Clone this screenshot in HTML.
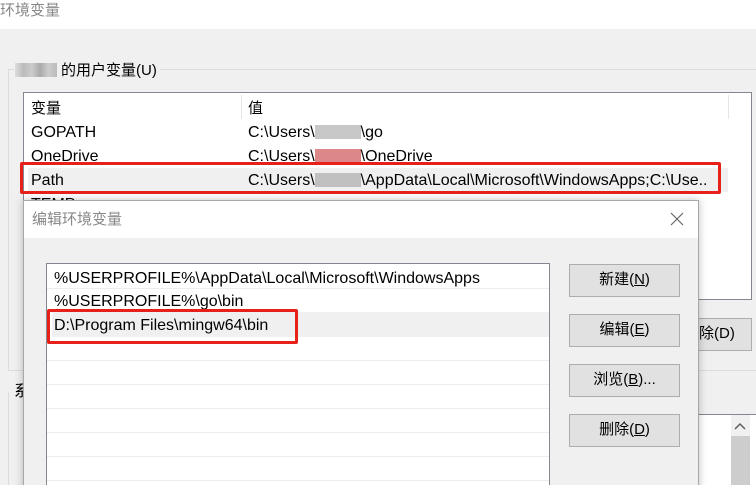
<!DOCTYPE html><html><head><meta charset="utf-8"><style>
*{margin:0;padding:0;box-sizing:border-box}
html{overflow:hidden;height:485px}
body{width:756px;height:485px;overflow:hidden;background:#f0f0f0;position:relative;font-family:"Liberation Sans","Noto Sans CJK SC",sans-serif;font-size:16px;color:#000}
.a{position:absolute}
.t{position:absolute;white-space:nowrap;line-height:18px}
.btn{position:absolute;background:#e1e1e1;border:1px solid #adadad;text-align:center;line-height:30px;font-size:15px;white-space:nowrap}
.hl{position:absolute;height:1px;background:#ececec}
</style></head><body>
<div class="a" style="left:0;top:0;width:756px;height:29px;background:#fff"></div>
<div class="t" style="left:0;top:2px;color:#888;font-size:15px">环境变量</div>
<div class="a" style="left:8px;top:69px;width:760px;height:302px;border:1px solid #dcdcdc;border-right:none"></div>
<div class="a" style="left:14px;top:60px;width:146px;height:20px;background:#f0f0f0"></div>
<div class="a" style="left:15px;top:63px;width:42px;height:14px;background:linear-gradient(90deg,#ddd,#bbb,#ccc,#aaa,#ccc,#bbb)"></div>
<div class="t" style="left:61px;top:62px;font-size:15px">的用户变量(U)</div>
<div class="a" style="left:23px;top:92px;width:729px;height:208px;background:#fff;border:1px solid #828790"></div>
<div class="a" style="left:241px;top:95px;width:1px;height:24px;background:#e5e5e5"></div>
<div class="a" style="left:728px;top:95px;width:1px;height:24px;background:#e5e5e5"></div>
<div class="t" style="left:31px;top:100px;font-size:15px">变量</div>
<div class="t" style="left:248px;top:100px;font-size:15px">值</div>
<div class="t" style="left:31px;top:124px">GOPATH</div>
<div class="t" style="left:248px;top:124px">C:\Users\<span style="display:inline-block;width:46px;height:14px;background:#c8c8c8;vertical-align:-2px"></span>\go</div>
<div class="t" style="left:31px;top:148px">OneDrive</div>
<div class="t" style="left:248px;top:148px">C:\Users\<span style="display:inline-block;width:46px;height:14px;background:#d88;vertical-align:-2px"></span>\OneDrive</div>
<div class="a" style="left:28px;top:168px;width:700px;height:24px;background:#f0f0f0"></div>
<div class="t" style="left:31px;top:172px">Path</div>
<div class="t" style="left:248px;top:172px">C:\Users\<span style="display:inline-block;width:46px;height:14px;background:#c0c0c0;vertical-align:-2px"></span>\AppData\Local\Microsoft\WindowsApps;C:\Use..</div>
<div class="t" style="left:31px;top:196px">TEMP</div>
<div class="a" style="left:20px;top:162px;width:701px;height:32px;border:3px solid #e8201a;border-radius:2px"></div>
<div class="btn" style="left:690px;top:318px;width:62px;height:33px;text-align:left;padding-left:8px">除(D)</div>
<div class="a" style="left:698px;top:370px;width:60px;height:1px;background:#dcdcdc"></div>
<div class="a" style="left:8px;top:392px;width:1px;height:100px;background:#dcdcdc"></div>
<div class="t" style="left:14px;top:383px">系</div>
<div class="a" style="left:698px;top:414px;width:60px;height:80px;background:#fff;border:1px solid #828790"></div>
<div class="a" style="left:731px;top:415px;width:19px;height:80px;background:#f0f0f0"></div>
<div class="a" style="left:731px;top:436px;width:19px;height:60px;background:#cdcdcd"></div>
<svg class="a" style="left:733px;top:421px" width="14" height="10"><path d="M2 8 L7 3 L12 8" fill="none" stroke="#606060" stroke-width="1.5"/></svg>
<div class="a" style="left:23px;top:200px;width:676px;height:300px;background:#f0f0f0;border:1px solid #a8a8a8;box-shadow:0 0 8px rgba(0,0,0,.25)"></div>
<div class="a" style="left:24px;top:201px;width:674px;height:37px;background:#fff"></div>
<div class="t" style="left:32px;top:211px;color:#888;font-size:15px">编辑环境变量</div>
<svg class="a" style="left:670px;top:212px" width="14" height="14"><path d="M1 1 L13 13 M13 1 L1 13" stroke="#666" stroke-width="1.2"/></svg>
<div class="a" style="left:46px;top:263px;width:504px;height:230px;background:#fff;border:1px solid #828790"></div>
<div class="hl" style="left:47px;top:288px;width:502px"></div>
<div class="hl" style="left:47px;top:360px;width:502px"></div>
<div class="hl" style="left:47px;top:384px;width:502px"></div>
<div class="hl" style="left:47px;top:408px;width:502px"></div>
<div class="hl" style="left:47px;top:432px;width:502px"></div>
<div class="hl" style="left:47px;top:456px;width:502px"></div>
<div class="hl" style="left:47px;top:480px;width:502px"></div>
<div class="a" style="left:52px;top:312px;width:497px;height:25px;background:#f0f0f0"></div>
<div class="t" style="left:54px;top:270px">%USERPROFILE%\AppData\Local\Microsoft\WindowsApps</div>
<div class="t" style="left:54px;top:293px">%USERPROFILE%\go\bin</div>
<div class="t" style="left:54px;top:317px">D:\Program Files\mingw64\bin</div>
<div class="a" style="left:47px;top:309px;width:251px;height:35px;border:3px solid #e8201a;border-radius:2px"></div>
<div class="btn" style="left:569px;top:264px;width:111px;height:33px">新建(<u>N</u>)</div>
<div class="btn" style="left:569px;top:314px;width:111px;height:33px">编辑(<u>E</u>)</div>
<div class="btn" style="left:569px;top:364px;width:111px;height:33px">浏览(<u>B</u>)...</div>
<div class="btn" style="left:569px;top:414px;width:111px;height:33px">删除(<u>D</u>)</div>
</body></html>
